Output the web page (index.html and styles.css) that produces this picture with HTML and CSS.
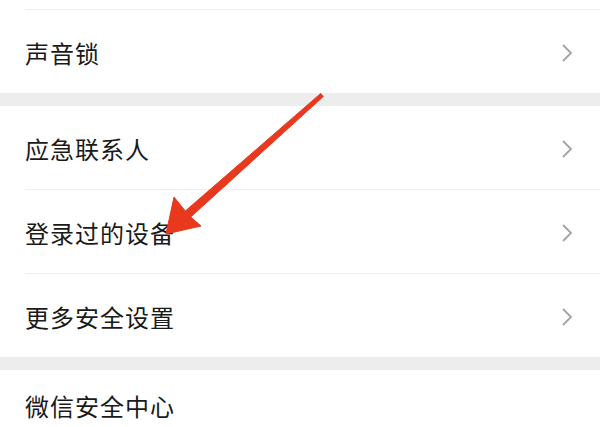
FILE: index.html
```html
<!DOCTYPE html>
<html lang="zh-CN">
<head>
    <meta charset="UTF-8">
    <meta name="viewport" content="width=device-width, initial-scale=1.0">
    <title>账号与安全</title>
    <link rel="stylesheet" href="styles.css">
</head>
<body>
    <div class="settings">
        <div class="group">
            <div class="row row-cut"></div>
            <div class="row">
                <span class="label">声音锁</span>
                <svg class="chevron" width="12" height="20" viewBox="0 0 12 20"><path d="M2 2 L10 10 L2 18"/></svg>
            </div>
        </div>
        <div class="gap"></div>
        <div class="group">
            <div class="row">
                <span class="label">应急联系人</span>
                <svg class="chevron" width="12" height="20" viewBox="0 0 12 20"><path d="M2 2 L10 10 L2 18"/></svg>
            </div>
            <div class="row">
                <span class="label">登录过的设备</span>
                <svg class="chevron" width="12" height="20" viewBox="0 0 12 20"><path d="M2 2 L10 10 L2 18"/></svg>
            </div>
            <div class="row">
                <span class="label">更多安全设置</span>
                <svg class="chevron" width="12" height="20" viewBox="0 0 12 20"><path d="M2 2 L10 10 L2 18"/></svg>
            </div>
        </div>
        <div class="gap"></div>
        <div class="group">
            <div class="row row-last">
                <span class="label">微信安全中心</span>
            </div>
        </div>
    </div>
    <svg class="arrow" width="600" height="427" viewBox="0 0 600 427">
        <polygon points="323.3,96.5 190.7,217 201,226 166,234 174,197 185.3,211 320.7,93.5"/>
    </svg>
</body>
</html>
```

FILE: styles.css
```css
html, body {
    margin: 0;
    background: white;
}
body {
    position: relative;
    width: 600px;
    height: 427px;
    overflow: hidden;
    font-family: "Noto Sans CJK SC", "Noto Sans", sans-serif;
}
.settings {
    display: flex;
    flex-direction: column;
}
.group {
    background: white;
    padding-left: 25px;
}
.row {
    height: 84px;
    display: flex;
    align-items: center;
    justify-content: space-between;
    padding-right: 27px;
    padding-top: 2px;
    box-sizing: border-box;
    border-top: 1px solid #efefef;
}
.group .row:first-child {
    border-top: none;
    height: 83px;
}
.group .row.row-cut {
    height: 9px;
    padding: 0;
}
.group .row.row-last {
    height: 57px;
    padding-top: 13px;
}
.label {
    font-size: 24px;
    letter-spacing: 1px;
    color: #1a1a1a;
}
.chevron {
    fill: none;
    stroke: #a3a3a3;
    stroke-width: 1.8;
}
.gap {
    height: 13px;
    background: #ededed;
}
.arrow {
    position: absolute;
    left: 0;
    top: 0;
}
.arrow polygon {
    fill: #e8391f;
    stroke: #e8391f;
    stroke-width: 1;
    stroke-linejoin: round;
}
```
